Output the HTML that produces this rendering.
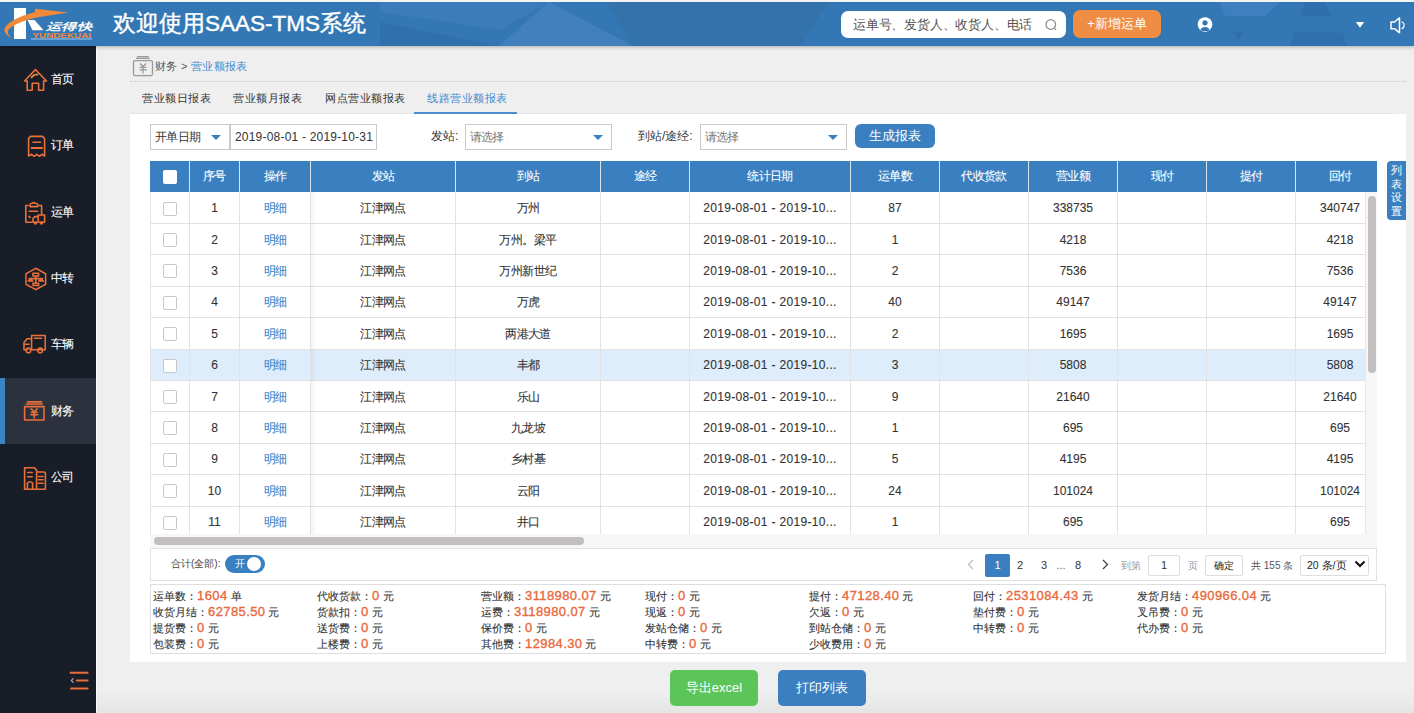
<!DOCTYPE html>
<html><head><meta charset="utf-8">
<style>
*{box-sizing:border-box;margin:0;padding:0}
html,body{width:1414px;height:713px;overflow:hidden;background:#efefef;font-family:"Liberation Sans",sans-serif;color:#333;font-size:12px}
.a{position:absolute}
#hdr{left:0;top:0;width:1414px;height:46px;background:#3378b5;overflow:hidden;z-index:2;box-shadow:0 1px 4px rgba(0,0,0,0.28)}
#side{left:0;top:46px;width:96px;height:667px;background:#181d28}
.nav{left:0;width:96px;height:66px}
.nav .t{position:absolute;left:51px;top:0;width:40px;line-height:12px;font-size:12px;letter-spacing:-1px;color:#fff}
.nav svg{position:absolute}
#panel{left:130px;top:114px;width:1276px;height:548px;background:#fff}
.box{border:1px solid #c9c9c9;background:#fff}
.tri{width:0;height:0;border-left:5px solid transparent;border-right:5px solid transparent;border-top:5px solid #3a80c0}
#thead{left:150px;top:161px;width:1227px;height:31px;background:#3a80c0}
.th{position:absolute;top:0;height:31px;line-height:31px;text-align:center;color:#fff;font-size:12px;letter-spacing:-0.6px;border-right:1px solid #e5e5e5}
.row{position:absolute;left:150px;width:1215px;height:32px;border-bottom:1px solid #e0e0e0}
.td{position:absolute;top:0;height:31px;line-height:31px;text-align:center;font-size:12px;color:#333;border-right:1px solid #e0e0e0;white-space:nowrap;overflow:hidden}
.cb{position:absolute;width:14px;height:14px;border:1px solid #c8c8c8;border-radius:2px;background:#fff}
.lk{color:#3d84c6}
.td,.th,.nav .t,.sm{-webkit-text-stroke:0.1px currentColor}
.td{font-size:12px;letter-spacing:-0.6px}.td .n{font-size:12px;letter-spacing:0}
.sm{position:absolute;font-size:11px;line-height:16px;color:#333;white-space:nowrap}
.sm b{font-weight:normal;color:#e8693a;font-size:13px;letter-spacing:0.4px;-webkit-text-stroke:0.35px #e8693a}
.sm i{font-style:normal;display:inline-block;width:8px;text-align:center}
</style></head><body>
<!-- HEADER -->
<div id="hdr" class="a">
  <div class="a" style="left:0;top:0;width:1414px;height:2px;background:#f4f4f4"></div>
  <svg class="a" style="left:0;top:2px" width="1414" height="44" viewBox="0 2 1414 44">
 <polygon points="380,2 549,2 500,30 380,12" fill="#3e7dbb" opacity="0.8"/>
 <polygon points="380,22 500,46 380,46" fill="#2f6eab" opacity="0.8"/>
 <polygon points="549,2 499,46 633,46" fill="#4582bf" opacity="0.8"/>
 <polygon points="606,2 829,2 800,46 633,46" fill="#3570a9" opacity="0.8"/>
 <polygon points="1220,2 1280,2 1265,16 1225,16" fill="#3f81c0" opacity="0.9"/>
 <polygon points="1304,2 1324,2 1332,16 1301,16" fill="#2f6dab" opacity="0.8"/>
 <polygon points="1233,32.5 1244,32.5 1238,40" fill="#2f6dab" opacity="0.8"/>
 <polygon points="1294,32.5 1343,32.5 1347,46 1290,46" fill="#2f6dab" opacity="0.8"/>
</svg>
  <div class="a" style="left:113px;top:10px;font-size:22.5px;line-height:28px;-webkit-text-stroke:0.4px #fff;color:#fff;white-space:nowrap">欢迎使用SAAS-TMS系统</div>
  <div class="a" style="left:841px;top:11px;width:225px;height:27px;background:#fff;border-radius:7px"></div>
  <div class="a" style="left:853px;top:11px;line-height:27px;font-size:13px;letter-spacing:-0.2px;color:#555;white-space:nowrap">运单号、发货人、收货人、电话</div>
  <div class="a" style="left:1073px;top:10px;width:88px;height:28px;background:#f08d44;border-radius:7px;color:#fff;font-size:13px;line-height:28px;text-align:center">+新增运单</div>
</div>
<!-- SIDEBAR -->
<div id="side" class="a"></div>
<div class="a" style="left:96px;top:46px;width:1px;height:667px;background:#fafafa"></div>
<div class="a" style="left:97px;top:688px;width:1317px;height:25px;background:linear-gradient(#efefef,#e5e5e5)"></div>
<div class="a" style="left:0;top:378px;width:96px;height:66px;background:#2c313d"></div>
<div class="a" style="left:0;top:378px;width:5px;height:66px;background:#3a85c6"></div>
<div class="nav a" style="top:46px"><div class="t" style="top:27px">首页</div></div>
<div class="nav a" style="top:112px"><div class="t" style="top:27px">订单</div></div>
<div class="nav a" style="top:179px"><div class="t" style="top:27px">运单</div></div>
<div class="nav a" style="top:245px"><div class="t" style="top:27px">中转</div></div>
<div class="nav a" style="top:311px"><div class="t" style="top:27px">车辆</div></div>
<div class="nav a" style="top:378px"><div class="t" style="top:27px">财务</div></div>
<div class="nav a" style="top:444px"><div class="t" style="top:27px">公司</div></div>

<!-- BREADCRUMB -->
<div class="a" style="left:155px;top:60px;font-size:11px;letter-spacing:0.3px;line-height:12px;color:#555;white-space:nowrap">财务 &gt; <span style="color:#3d8ad0">营业额报表</span></div>
<div class="a" style="left:130px;top:81px;width:1276px;height:0;border-top:1px dotted #c8c8c8"></div>
<div class="a" style="left:142px;top:92px;font-size:11px;letter-spacing:0.5px;line-height:12px;color:#333;white-space:nowrap">营业额日报表</div>
<div class="a" style="left:233px;top:92px;font-size:11px;letter-spacing:0.5px;line-height:12px;color:#333;white-space:nowrap">营业额月报表</div>
<div class="a" style="left:325px;top:92px;font-size:11px;letter-spacing:0.5px;line-height:12px;color:#333;white-space:nowrap">网点营业额报表</div>
<div class="a" style="left:427px;top:92px;font-size:11px;letter-spacing:0.5px;line-height:12px;color:#3d8ad0;white-space:nowrap">线路营业额报表</div>
<div class="a" style="left:130px;top:113px;width:1265px;height:1px;background:#e5e5e5"></div>
<div class="a" style="left:414px;top:112px;width:103px;height:2px;background:#4a90cf"></div>

<!-- PANEL -->
<div id="panel" class="a"></div>
<div class="a" style="left:150px;top:161px;width:1227px;height:31px;background:#3a80c0"></div>
<div class="a" style="left:189.0px;top:161px;width:1px;height:31px;background:#d9e6f2"></div>
<div class="a" style="left:239.0px;top:161px;width:1px;height:31px;background:#d9e6f2"></div>
<div class="a" style="left:310.0px;top:161px;width:1px;height:31px;background:#d9e6f2"></div>
<div class="a" style="left:455.0px;top:161px;width:1px;height:31px;background:#d9e6f2"></div>
<div class="a" style="left:600.0px;top:161px;width:1px;height:31px;background:#d9e6f2"></div>
<div class="a" style="left:689.0px;top:161px;width:1px;height:31px;background:#d9e6f2"></div>
<div class="a" style="left:850.0px;top:161px;width:1px;height:31px;background:#d9e6f2"></div>
<div class="a" style="left:939.0px;top:161px;width:1px;height:31px;background:#d9e6f2"></div>
<div class="a" style="left:1028.0px;top:161px;width:1px;height:31px;background:#d9e6f2"></div>
<div class="a" style="left:1117.0px;top:161px;width:1px;height:31px;background:#d9e6f2"></div>
<div class="a" style="left:1206.0px;top:161px;width:1px;height:31px;background:#d9e6f2"></div>
<div class="a" style="left:1295.0px;top:161px;width:1px;height:31px;background:#d9e6f2"></div>
<div class="a th" style="left:189.5px;top:161px;width:50.0px;border:none">序号</div>
<div class="a th" style="left:239.5px;top:161px;width:71.0px;border:none">操作</div>
<div class="a th" style="left:310.5px;top:161px;width:145.0px;border:none">发站</div>
<div class="a th" style="left:455.5px;top:161px;width:145.0px;border:none">到站</div>
<div class="a th" style="left:600.5px;top:161px;width:89.0px;border:none">途经</div>
<div class="a th" style="left:689.5px;top:161px;width:161.0px;border:none">统计日期</div>
<div class="a th" style="left:850.5px;top:161px;width:89.0px;border:none">运单数</div>
<div class="a th" style="left:939.5px;top:161px;width:89.0px;border:none">代收货款</div>
<div class="a th" style="left:1028.5px;top:161px;width:89.0px;border:none">营业额</div>
<div class="a th" style="left:1117.5px;top:161px;width:89.0px;border:none">现付</div>
<div class="a th" style="left:1206.5px;top:161px;width:89.0px;border:none">提付</div>
<div class="a th" style="left:1299.5px;top:161px;width:81.8px;border:none">回付</div>
<div class="a" style="left:163px;top:170px;width:14px;height:14px;background:#fff;border-radius:2px"></div>
<div class="a" id="tbody" style="left:150px;top:192px;width:1227px;height:342px;overflow:hidden">
<div class="a" style="left:0;top:0.00px;width:1215px;height:31.40px;background:#fff"></div>
<div class="a td" style="left:39.5px;width:50.0px;top:1.20px;border:none"><span class="n">1</span></div>
<div class="a td" style="left:89.5px;width:71.0px;top:1.20px;border:none"><span class="lk">明细</span></div>
<div class="a td" style="left:160.5px;width:145.0px;top:1.20px;border:none">江津网点</div>
<div class="a td" style="left:305.5px;width:145.0px;top:1.20px;border:none">万州</div>
<div class="a td" style="left:539.5px;width:161.0px;top:1.20px;border:none"><span class="n" style="letter-spacing:0.32px">2019-08-01 - 2019-10...</span></div>
<div class="a td" style="left:700.5px;width:89.0px;top:1.20px;border:none"><span class="n">87</span></div>
<div class="a td" style="left:878.5px;width:89.0px;top:1.20px;border:none"><span class="n">338735</span></div>
<div class="a td" style="left:1145.5px;width:89px;top:1.20px;border:none"><span class="n">340747</span></div>
<div class="a cb" style="left:13px;top:9.50px"></div>
<div class="a" style="left:0;top:31.40px;width:1215px;height:31.40px;background:#fff"></div>
<div class="a td" style="left:39.5px;width:50.0px;top:32.60px;border:none"><span class="n">2</span></div>
<div class="a td" style="left:89.5px;width:71.0px;top:32.60px;border:none"><span class="lk">明细</span></div>
<div class="a td" style="left:160.5px;width:145.0px;top:32.60px;border:none">江津网点</div>
<div class="a td" style="left:305.5px;width:145.0px;top:32.60px;border:none">万州。梁平</div>
<div class="a td" style="left:539.5px;width:161.0px;top:32.60px;border:none"><span class="n" style="letter-spacing:0.32px">2019-08-01 - 2019-10...</span></div>
<div class="a td" style="left:700.5px;width:89.0px;top:32.60px;border:none"><span class="n">1</span></div>
<div class="a td" style="left:878.5px;width:89.0px;top:32.60px;border:none"><span class="n">4218</span></div>
<div class="a td" style="left:1145.5px;width:89px;top:32.60px;border:none"><span class="n">4218</span></div>
<div class="a cb" style="left:13px;top:40.90px"></div>
<div class="a" style="left:0;top:62.80px;width:1215px;height:31.40px;background:#fff"></div>
<div class="a td" style="left:39.5px;width:50.0px;top:64.00px;border:none"><span class="n">3</span></div>
<div class="a td" style="left:89.5px;width:71.0px;top:64.00px;border:none"><span class="lk">明细</span></div>
<div class="a td" style="left:160.5px;width:145.0px;top:64.00px;border:none">江津网点</div>
<div class="a td" style="left:305.5px;width:145.0px;top:64.00px;border:none">万州新世纪</div>
<div class="a td" style="left:539.5px;width:161.0px;top:64.00px;border:none"><span class="n" style="letter-spacing:0.32px">2019-08-01 - 2019-10...</span></div>
<div class="a td" style="left:700.5px;width:89.0px;top:64.00px;border:none"><span class="n">2</span></div>
<div class="a td" style="left:878.5px;width:89.0px;top:64.00px;border:none"><span class="n">7536</span></div>
<div class="a td" style="left:1145.5px;width:89px;top:64.00px;border:none"><span class="n">7536</span></div>
<div class="a cb" style="left:13px;top:72.30px"></div>
<div class="a" style="left:0;top:94.20px;width:1215px;height:31.40px;background:#fff"></div>
<div class="a td" style="left:39.5px;width:50.0px;top:95.40px;border:none"><span class="n">4</span></div>
<div class="a td" style="left:89.5px;width:71.0px;top:95.40px;border:none"><span class="lk">明细</span></div>
<div class="a td" style="left:160.5px;width:145.0px;top:95.40px;border:none">江津网点</div>
<div class="a td" style="left:305.5px;width:145.0px;top:95.40px;border:none">万虎</div>
<div class="a td" style="left:539.5px;width:161.0px;top:95.40px;border:none"><span class="n" style="letter-spacing:0.32px">2019-08-01 - 2019-10...</span></div>
<div class="a td" style="left:700.5px;width:89.0px;top:95.40px;border:none"><span class="n">40</span></div>
<div class="a td" style="left:878.5px;width:89.0px;top:95.40px;border:none"><span class="n">49147</span></div>
<div class="a td" style="left:1145.5px;width:89px;top:95.40px;border:none"><span class="n">49147</span></div>
<div class="a cb" style="left:13px;top:103.70px"></div>
<div class="a" style="left:0;top:125.60px;width:1215px;height:31.40px;background:#fff"></div>
<div class="a td" style="left:39.5px;width:50.0px;top:126.80px;border:none"><span class="n">5</span></div>
<div class="a td" style="left:89.5px;width:71.0px;top:126.80px;border:none"><span class="lk">明细</span></div>
<div class="a td" style="left:160.5px;width:145.0px;top:126.80px;border:none">江津网点</div>
<div class="a td" style="left:305.5px;width:145.0px;top:126.80px;border:none">两港大道</div>
<div class="a td" style="left:539.5px;width:161.0px;top:126.80px;border:none"><span class="n" style="letter-spacing:0.32px">2019-08-01 - 2019-10...</span></div>
<div class="a td" style="left:700.5px;width:89.0px;top:126.80px;border:none"><span class="n">2</span></div>
<div class="a td" style="left:878.5px;width:89.0px;top:126.80px;border:none"><span class="n">1695</span></div>
<div class="a td" style="left:1145.5px;width:89px;top:126.80px;border:none"><span class="n">1695</span></div>
<div class="a cb" style="left:13px;top:135.10px"></div>
<div class="a" style="left:0;top:157.00px;width:1215px;height:31.40px;background:#ddedfb"></div>
<div class="a td" style="left:39.5px;width:50.0px;top:158.20px;border:none"><span class="n">6</span></div>
<div class="a td" style="left:89.5px;width:71.0px;top:158.20px;border:none"><span class="lk">明细</span></div>
<div class="a td" style="left:160.5px;width:145.0px;top:158.20px;border:none">江津网点</div>
<div class="a td" style="left:305.5px;width:145.0px;top:158.20px;border:none">丰都</div>
<div class="a td" style="left:539.5px;width:161.0px;top:158.20px;border:none"><span class="n" style="letter-spacing:0.32px">2019-08-01 - 2019-10...</span></div>
<div class="a td" style="left:700.5px;width:89.0px;top:158.20px;border:none"><span class="n">3</span></div>
<div class="a td" style="left:878.5px;width:89.0px;top:158.20px;border:none"><span class="n">5808</span></div>
<div class="a td" style="left:1145.5px;width:89px;top:158.20px;border:none"><span class="n">5808</span></div>
<div class="a cb" style="left:13px;top:166.50px"></div>
<div class="a" style="left:0;top:188.40px;width:1215px;height:31.40px;background:#fff"></div>
<div class="a td" style="left:39.5px;width:50.0px;top:189.60px;border:none"><span class="n">7</span></div>
<div class="a td" style="left:89.5px;width:71.0px;top:189.60px;border:none"><span class="lk">明细</span></div>
<div class="a td" style="left:160.5px;width:145.0px;top:189.60px;border:none">江津网点</div>
<div class="a td" style="left:305.5px;width:145.0px;top:189.60px;border:none">乐山</div>
<div class="a td" style="left:539.5px;width:161.0px;top:189.60px;border:none"><span class="n" style="letter-spacing:0.32px">2019-08-01 - 2019-10...</span></div>
<div class="a td" style="left:700.5px;width:89.0px;top:189.60px;border:none"><span class="n">9</span></div>
<div class="a td" style="left:878.5px;width:89.0px;top:189.60px;border:none"><span class="n">21640</span></div>
<div class="a td" style="left:1145.5px;width:89px;top:189.60px;border:none"><span class="n">21640</span></div>
<div class="a cb" style="left:13px;top:197.90px"></div>
<div class="a" style="left:0;top:219.80px;width:1215px;height:31.40px;background:#fff"></div>
<div class="a td" style="left:39.5px;width:50.0px;top:221.00px;border:none"><span class="n">8</span></div>
<div class="a td" style="left:89.5px;width:71.0px;top:221.00px;border:none"><span class="lk">明细</span></div>
<div class="a td" style="left:160.5px;width:145.0px;top:221.00px;border:none">江津网点</div>
<div class="a td" style="left:305.5px;width:145.0px;top:221.00px;border:none">九龙坡</div>
<div class="a td" style="left:539.5px;width:161.0px;top:221.00px;border:none"><span class="n" style="letter-spacing:0.32px">2019-08-01 - 2019-10...</span></div>
<div class="a td" style="left:700.5px;width:89.0px;top:221.00px;border:none"><span class="n">1</span></div>
<div class="a td" style="left:878.5px;width:89.0px;top:221.00px;border:none"><span class="n">695</span></div>
<div class="a td" style="left:1145.5px;width:89px;top:221.00px;border:none"><span class="n">695</span></div>
<div class="a cb" style="left:13px;top:229.30px"></div>
<div class="a" style="left:0;top:251.20px;width:1215px;height:31.40px;background:#fff"></div>
<div class="a td" style="left:39.5px;width:50.0px;top:252.40px;border:none"><span class="n">9</span></div>
<div class="a td" style="left:89.5px;width:71.0px;top:252.40px;border:none"><span class="lk">明细</span></div>
<div class="a td" style="left:160.5px;width:145.0px;top:252.40px;border:none">江津网点</div>
<div class="a td" style="left:305.5px;width:145.0px;top:252.40px;border:none">乡村基</div>
<div class="a td" style="left:539.5px;width:161.0px;top:252.40px;border:none"><span class="n" style="letter-spacing:0.32px">2019-08-01 - 2019-10...</span></div>
<div class="a td" style="left:700.5px;width:89.0px;top:252.40px;border:none"><span class="n">5</span></div>
<div class="a td" style="left:878.5px;width:89.0px;top:252.40px;border:none"><span class="n">4195</span></div>
<div class="a td" style="left:1145.5px;width:89px;top:252.40px;border:none"><span class="n">4195</span></div>
<div class="a cb" style="left:13px;top:260.70px"></div>
<div class="a" style="left:0;top:282.60px;width:1215px;height:31.40px;background:#fff"></div>
<div class="a td" style="left:39.5px;width:50.0px;top:283.80px;border:none"><span class="n">10</span></div>
<div class="a td" style="left:89.5px;width:71.0px;top:283.80px;border:none"><span class="lk">明细</span></div>
<div class="a td" style="left:160.5px;width:145.0px;top:283.80px;border:none">江津网点</div>
<div class="a td" style="left:305.5px;width:145.0px;top:283.80px;border:none">云阳</div>
<div class="a td" style="left:539.5px;width:161.0px;top:283.80px;border:none"><span class="n" style="letter-spacing:0.32px">2019-08-01 - 2019-10...</span></div>
<div class="a td" style="left:700.5px;width:89.0px;top:283.80px;border:none"><span class="n">24</span></div>
<div class="a td" style="left:878.5px;width:89.0px;top:283.80px;border:none"><span class="n">101024</span></div>
<div class="a td" style="left:1145.5px;width:89px;top:283.80px;border:none"><span class="n">101024</span></div>
<div class="a cb" style="left:13px;top:292.10px"></div>
<div class="a" style="left:0;top:314.00px;width:1215px;height:31.40px;background:#fff"></div>
<div class="a td" style="left:39.5px;width:50.0px;top:315.20px;border:none"><span class="n">11</span></div>
<div class="a td" style="left:89.5px;width:71.0px;top:315.20px;border:none"><span class="lk">明细</span></div>
<div class="a td" style="left:160.5px;width:145.0px;top:315.20px;border:none">江津网点</div>
<div class="a td" style="left:305.5px;width:145.0px;top:315.20px;border:none">井口</div>
<div class="a td" style="left:539.5px;width:161.0px;top:315.20px;border:none"><span class="n" style="letter-spacing:0.32px">2019-08-01 - 2019-10...</span></div>
<div class="a td" style="left:700.5px;width:89.0px;top:315.20px;border:none"><span class="n">1</span></div>
<div class="a td" style="left:878.5px;width:89.0px;top:315.20px;border:none"><span class="n">695</span></div>
<div class="a td" style="left:1145.5px;width:89px;top:315.20px;border:none"><span class="n">695</span></div>
<div class="a cb" style="left:13px;top:323.50px"></div>
<div class="a" style="left:0;top:30.90px;width:1215px;height:1px;background:#e2e2e2"></div>
<div class="a" style="left:0;top:62.30px;width:1215px;height:1px;background:#e2e2e2"></div>
<div class="a" style="left:0;top:93.70px;width:1215px;height:1px;background:#e2e2e2"></div>
<div class="a" style="left:0;top:125.10px;width:1215px;height:1px;background:#e2e2e2"></div>
<div class="a" style="left:0;top:156.50px;width:1215px;height:1px;background:#e2e2e2"></div>
<div class="a" style="left:0;top:187.90px;width:1215px;height:1px;background:#e2e2e2"></div>
<div class="a" style="left:0;top:219.30px;width:1215px;height:1px;background:#e2e2e2"></div>
<div class="a" style="left:0;top:250.70px;width:1215px;height:1px;background:#e2e2e2"></div>
<div class="a" style="left:0;top:282.10px;width:1215px;height:1px;background:#e2e2e2"></div>
<div class="a" style="left:0;top:313.50px;width:1215px;height:1px;background:#e2e2e2"></div>
<div class="a" style="left:0.0px;top:0;width:1px;height:342px;background:#e2e2e2"></div>
<div class="a" style="left:39.0px;top:0;width:1px;height:342px;background:#e2e2e2"></div>
<div class="a" style="left:89.0px;top:0;width:1px;height:342px;background:#e2e2e2"></div>
<div class="a" style="left:160.0px;top:0;width:1px;height:342px;background:#e2e2e2"></div>
<div class="a" style="left:305.0px;top:0;width:1px;height:342px;background:#e2e2e2"></div>
<div class="a" style="left:450.0px;top:0;width:1px;height:342px;background:#e2e2e2"></div>
<div class="a" style="left:539.0px;top:0;width:1px;height:342px;background:#e2e2e2"></div>
<div class="a" style="left:700.0px;top:0;width:1px;height:342px;background:#e2e2e2"></div>
<div class="a" style="left:789.0px;top:0;width:1px;height:342px;background:#e2e2e2"></div>
<div class="a" style="left:878.0px;top:0;width:1px;height:342px;background:#e2e2e2"></div>
<div class="a" style="left:967.0px;top:0;width:1px;height:342px;background:#e2e2e2"></div>
<div class="a" style="left:1056.0px;top:0;width:1px;height:342px;background:#e2e2e2"></div>
<div class="a" style="left:1145.0px;top:0;width:1px;height:342px;background:#e2e2e2"></div>
<div class="a" style="left:1214.5px;top:0;width:1px;height:342px;background:#e2e2e2"></div>
</div>
<!-- SIDEBAR ICONS -->
<svg class="a" style="left:0;top:0" width="96" height="713" viewBox="0 0 96 713" fill="none" stroke="#e8703a" stroke-width="1.6" stroke-linejoin="round" stroke-linecap="round">
 <!-- home -->
 <path d="M27.2 90.3 V81 H24.5 L35.5 69.6 L46.5 81 H43.6 V90.3 H38.6 V83.2 H32.2 V90.3 Z"/>
 <path d="M31.5 77.5 Q34 74 37.5 74.6" stroke="#f09040"/>
 <!-- receipt -->
 <path d="M30.5 136.4 H42.5 L44.6 138.6 V156 L42 154.3 L39.5 156.3 L36.8 154.3 L34.2 156.3 L31.5 154.3 L28.6 156 V138.4 Z"/>
 <path d="M33 142.2 H40.5"/>
 <path d="M31.5 148 H42" stroke-width="2"/>
 <!-- waybill clipboard + truck -->
 <path d="M28 205.5 H25.8 V222.2 H32"/>
 <path d="M39 205.5 H41.6 V214.8"/>
 <path d="M30 204.8 Q30.5 203 32.5 203.2 Q33.6 202 35 203.2 Q37.5 203 37.8 204.8 V206.6 H30 Z"/>
 <path d="M29.2 211.3 H37.5"/>
 <path d="M29 216.4 L30 217.4"/>
 <path d="M38.2 215 H44.6 V222.2 H33 V218.5 L34.8 216.6 H38.2 Z"/>
 <path d="M38.2 216 V221"/>
 <circle cx="35.5" cy="223" r="0.9"/><circle cx="41.5" cy="223" r="0.9"/>
 <!-- transfer hexagon -->
 <path d="M35.8 268.3 L45.6 273.8 V284.3 L35.8 289.6 L26 284.3 V273.8 Z" stroke-dasharray="2.6 0.9"/>
 <path d="M33 273.2 H38.6 V276 H33 Z"/>
 <path d="M35.8 276 V283.5"/>
 <path d="M29.2 278.6 H42.4"/>
 <path d="M28.2 281 L30.5 278.8 L32.8 281 Z"/>
 <path d="M38.8 281 L41.1 278.8 L43.4 281 Z"/>
 <path d="M33 283.3 H38.6 V285.5 H33 Z"/>
 <!-- truck -->
 <path d="M31.6 335.5 H45.2 V349.7 H31.6 Z" stroke-dasharray="1.2 0.6"/>
 <path d="M31.6 338.8 H27 L24 342.5 V349.7 H27.4"/>
 <path d="M25 344.3 H29"/>
 <path d="M34.5 338.2 H41.5"/>
 <circle cx="28.4" cy="350.4" r="2.3"/><circle cx="40.2" cy="350.4" r="2.3"/>
 <!-- finance -->
 <path d="M27.5 401.9 H41.5"/>
 <path d="M26.2 404 H42.2"/>
 <path d="M24.6 406.6 H44 V420 H24.6 Z" stroke-dasharray="1.2 0.5"/>
 <path d="M31.2 408.8 L34.2 412 L37.2 408.8 M31.5 412.4 H37 M30.8 414.8 H37.6 M34.2 412 V418"/>
 <!-- company -->
 <path d="M24.6 489.2 V467.8 H34.3 L36.6 470 V489.2"/>
 <path d="M36.6 472 H44.4 L45.4 473.3 V489.2 H24.6"/>
 <path d="M27.7 472.5 H32.2 M27.7 476.8 H32.2"/>
 <path d="M38.5 476.5 H43 M38.5 479.8 H43 M38.5 483.2 H43"/>
 <path d="M27.4 489 V483 Q30 480.5 32.6 483 V489"/>
 <!-- bottom toggler -->
 <path d="M70.5 672.8 H87.6 M71 688.4 H87.6" stroke-width="2"/>
 <path d="M76.8 680.5 H87.6" stroke-width="2"/>
 <path d="M73.2 678.6 L71.3 680.5 L73.2 682.4" stroke-width="1.2" stroke="#aaa"/>
</svg>
<!-- HEADER DECOR -->
<svg class="a" style="left:0;top:2px;z-index:3" width="96" height="44" viewBox="0 2 96 44">
 <rect x="14" y="8" width="12" height="31" fill="#fff"/>
 <path d="M27.5 20 H34.5 L43.5 30.3 H32.5 Z" fill="#fff"/>
 <path d="M11.5 38.5 Q3 33 4.5 28.5 Q9 19 34.5 12.2 L35.5 8.8 L68.5 12.5 L38 17.2 Q16 22 8.5 29.5 Q6.5 33.5 11.5 38.5 Z" fill="#f08a3a"/>
 <text x="46" y="30.2" font-size="10" font-style="italic" font-weight="bold" fill="#fff" font-family="Liberation Sans" textLength="46" lengthAdjust="spacingAndGlyphs">运得快</text>
 <text x="32.5" y="38" font-size="6.8" font-weight="bold" fill="#f08a3a" font-family="Liberation Sans" textLength="58.5" lengthAdjust="spacingAndGlyphs">YUNDEKUAI</text>
 <rect x="31" y="38.5" width="61" height="1" fill="#9cc8ee"/>
</svg>

<!-- search icon -->
<svg class="a" style="left:1042px;top:15px;z-index:3" width="18" height="18"><circle cx="8.8" cy="9.5" r="4.8" fill="none" stroke="#888" stroke-width="1.2"/><path d="M12.4 13.2 L14 14.9" stroke="#888" stroke-width="1.2"/></svg>
<!-- user icon -->
<svg class="a" style="left:1195px;top:15px;z-index:3" width="20" height="19"><circle cx="10" cy="9.5" r="7.3" fill="#fff"/><circle cx="10" cy="7.8" r="2.6" fill="#3275b2"/><path d="M5.3 14.3 Q10 9.8 14.7 14.3 L13 16 H7 Z" fill="#3275b2"/></svg>
<!-- dropdown -->
<svg class="a" style="left:1353px;top:19px;z-index:3" width="14" height="12"><path d="M2.8 3 H11.2 L7 8.8 Z" fill="#fff"/></svg>
<!-- speaker -->
<svg class="a" style="left:1386px;top:14px;z-index:3" width="24" height="22" fill="none" stroke="#fff" stroke-width="1.5" stroke-linejoin="round"><path d="M5 8 H8.5 L13.5 3.8 V18.8 L8.5 14.7 H5 Z"/><path d="M16 8 A3.6 3.6 0 0 1 16 14.6" stroke-linecap="round" stroke-width="1.3"/></svg>
<!-- breadcrumb icon -->
<svg class="a" style="left:132px;top:55px" width="22" height="22" fill="none" stroke="#999" stroke-width="1.3"><path d="M5 1.7 H16.8 M4 3.4 H17.8"/><rect x="1.5" y="5.6" width="19" height="15" rx="1.5"/><path d="M8 8.5 L11 11.5 L14 8.5 M7.6 12.3 H14.4 M7.3 14.8 H14.7 M11 11.5 V18.5"/></svg>

<!-- table left border / scroll areas -->
<div class="a" style="left:150px;top:192px;width:1px;height:356px;background:#e2e2e2"></div>
<div class="a" style="left:1365px;top:192px;width:12px;height:342px;background:#f7f7f7;border-left:1px solid #e6e6e6"></div>
<div class="a" style="left:1368px;top:196px;width:8px;height:177px;background:#c3bfbf;border-radius:4px"></div>
<div class="a" style="left:150px;top:534px;width:1227px;height:14px;background:#f7f7f7"></div>
<div class="a" style="left:154px;top:537px;width:430px;height:8px;background:#c3bfbf;border-radius:4px"></div>
<div class="a" style="left:311px;top:192px;width:6px;height:342px;background:linear-gradient(90deg,rgba(0,0,0,0.045),rgba(0,0,0,0))"></div>
<!-- pagination -->
<div class="a" style="left:150px;top:548px;width:1227px;height:33px;border:1px solid #e2e2e2;border-right:1px solid #e2e2e2"></div>
<div class="a" style="left:171px;top:557px;line-height:13px;font-size:10px;color:#444;white-space:nowrap">合计(全部):</div>
<div class="a" style="left:225px;top:555px;width:40px;height:18px;border-radius:9px;background:#3a80c0"></div>
<div class="a" style="left:235px;top:555px;line-height:18px;font-size:10px;color:#fff">开</div>
<div class="a" style="left:247px;top:557px;width:14px;height:14px;border-radius:50%;background:#fff"></div>
<svg class="a" style="left:966px;top:559px" width="10" height="12"><path d="M7 1 L2.5 5.5 L7 10" fill="none" stroke="#bbb" stroke-width="1.2"/></svg>
<div class="a" style="left:985px;top:554px;width:25px;height:23px;border-radius:2px;background:#3a80c0;color:#fff;text-align:center;line-height:23px;font-size:11px">1</div>
<div class="a" style="left:1010px;top:554px;width:20px;line-height:23px;text-align:center;font-size:11px">2</div>
<div class="a" style="left:1034px;top:554px;width:20px;line-height:23px;text-align:center;font-size:11px">3</div>
<div class="a" style="left:1051px;top:554px;width:20px;line-height:23px;text-align:center;font-size:11px;color:#666">...</div>
<div class="a" style="left:1068px;top:554px;width:20px;line-height:23px;text-align:center;font-size:11px">8</div>
<svg class="a" style="left:1100px;top:559px" width="10" height="12"><path d="M3 1 L7.5 5.5 L3 10" fill="none" stroke="#444" stroke-width="1.3"/></svg>
<div class="a" style="left:1121px;top:554px;line-height:23px;font-size:10px;color:#999;white-space:nowrap">到第</div>
<div class="a" style="left:1148px;top:555px;width:32px;height:21px;border:1px solid #ddd;border-radius:2px;text-align:center;line-height:19px;font-size:11px">1</div>
<div class="a" style="left:1188px;top:554px;line-height:23px;font-size:10px;color:#999">页</div>
<div class="a" style="left:1205px;top:555px;width:38px;height:21px;border:1px solid #ddd;border-radius:2px;text-align:center;line-height:19px;font-size:10px;color:#222">确定</div>
<div class="a" style="left:1251px;top:554px;line-height:23px;font-size:10px;color:#555;white-space:nowrap">共 155 条</div>
<div class="a" style="left:1300px;top:555px;width:69px;height:21px;border:1px solid #ddd;border-radius:2px;line-height:19px;font-size:10.5px;padding-left:6px;color:#222;white-space:nowrap">20 条/页</div>
<svg class="a" style="left:1354px;top:559px" width="12" height="10"><path d="M1.5 2.5 L6 7 L10.5 2.5" fill="none" stroke="#111" stroke-width="2"/></svg>
<!-- summary -->
<div class="a" style="left:150px;top:584px;width:1236px;height:70px;border:1px solid #dedede"></div>
<div class="sm" style="left:153px;top:587.5px">运单数：<b>1604</b> 单</div>
<div class="sm" style="left:153px;top:604px">收货月结：<b>62785.50</b> 元</div>
<div class="sm" style="left:153px;top:620px">提货费：<b>0</b> 元</div>
<div class="sm" style="left:153px;top:636.3px">包装费：<b>0</b> 元</div>
<div class="sm" style="left:317px;top:587.5px">代收货款：<b>0</b> 元</div>
<div class="sm" style="left:317px;top:604px">货款扣：<b>0</b> 元</div>
<div class="sm" style="left:317px;top:620px">送货费：<b>0</b> 元</div>
<div class="sm" style="left:317px;top:636.3px">上楼费：<b>0</b> 元</div>
<div class="sm" style="left:481px;top:587.5px">营业额：<b>3118980.07</b> 元</div>
<div class="sm" style="left:481px;top:604px">运费：<b>3118980.07</b> 元</div>
<div class="sm" style="left:481px;top:620px">保价费：<b>0</b> 元</div>
<div class="sm" style="left:481px;top:636.3px">其他费：<b>12984.30</b> 元</div>
<div class="sm" style="left:645px;top:587.5px">现付：<b>0</b> 元</div>
<div class="sm" style="left:645px;top:604px">现返：<b>0</b> 元</div>
<div class="sm" style="left:645px;top:620px">发站仓储：<b>0</b> 元</div>
<div class="sm" style="left:645px;top:636.3px">中转费：<b>0</b> 元</div>
<div class="sm" style="left:809px;top:587.5px">提付：<b>47128.40</b> 元</div>
<div class="sm" style="left:809px;top:604px">欠返：<b>0</b> 元</div>
<div class="sm" style="left:809px;top:620px">到站仓储：<b>0</b> 元</div>
<div class="sm" style="left:809px;top:636.3px">少收费用：<b>0</b> 元</div>
<div class="sm" style="left:973px;top:587.5px">回付：<b>2531084.43</b> 元</div>
<div class="sm" style="left:973px;top:604px">垫付费：<b>0</b> 元</div>
<div class="sm" style="left:973px;top:620px">中转费：<b>0</b> 元</div>
<div class="sm" style="left:1137px;top:587.5px">发货月结：<b>490966.04</b> 元</div>
<div class="sm" style="left:1137px;top:604px">叉吊费：<b>0</b> 元</div>
<div class="sm" style="left:1137px;top:620px">代办费：<b>0</b> 元</div>

<!-- buttons -->
<div class="a" style="left:670px;top:670px;width:88px;height:36px;background:#5bc55a;border-radius:5px;color:#fff;font-size:13px;line-height:36px;text-align:center">导出excel</div>
<div class="a" style="left:778px;top:670px;width:88px;height:36px;background:#3a80c0;border-radius:5px;color:#fff;font-size:13px;line-height:36px;text-align:center">打印列表</div>
<!-- FILTER -->
<div class="a box" style="left:150px;top:124px;width:80px;height:26px"></div>
<div class="a" style="left:155px;top:124px;line-height:26px;font-size:12px;letter-spacing:-0.6px;white-space:nowrap">开单日期</div>
<div class="a tri" style="left:211px;top:135px"></div>
<div class="a box" style="left:230px;top:124px;width:147px;height:26px"></div>
<div class="a" style="left:235px;top:124px;line-height:26px;font-size:12px;letter-spacing:0.2px;white-space:nowrap">2019-08-01 - 2019-10-31</div>
<div class="a" style="left:431px;top:124px;line-height:25px;font-size:12px;white-space:nowrap">发站:</div>
<div class="a box" style="left:465px;top:124px;width:147px;height:26px"></div>
<div class="a" style="left:470px;top:124px;line-height:26px;font-size:12px;letter-spacing:-1px;color:#777;white-space:nowrap">请选择</div>
<div class="a tri" style="left:593px;top:135px"></div>
<div class="a" style="left:638px;top:124px;line-height:25px;font-size:12px;white-space:nowrap">到站/途经:</div>
<div class="a box" style="left:700px;top:124px;width:147px;height:26px"></div>
<div class="a" style="left:705px;top:124px;line-height:26px;font-size:12px;letter-spacing:-1px;color:#777;white-space:nowrap">请选择</div>
<div class="a tri" style="left:828px;top:135px"></div>
<div class="a" style="left:855px;top:124px;width:80px;height:24px;background:#3a80c0;border-radius:6px;color:#fff;font-size:13px;line-height:24px;text-align:center">生成报表</div>
<!-- 列表设置 -->
<div class="a" style="left:1387px;top:161px;width:19px;height:59px;background:#3a80c0;border-radius:4px 0 0 4px;color:#fff;font-size:11px;line-height:13.5px;text-align:center;padding-top:3px">列<br>表<br>设<br>置</div>
</body></html>
